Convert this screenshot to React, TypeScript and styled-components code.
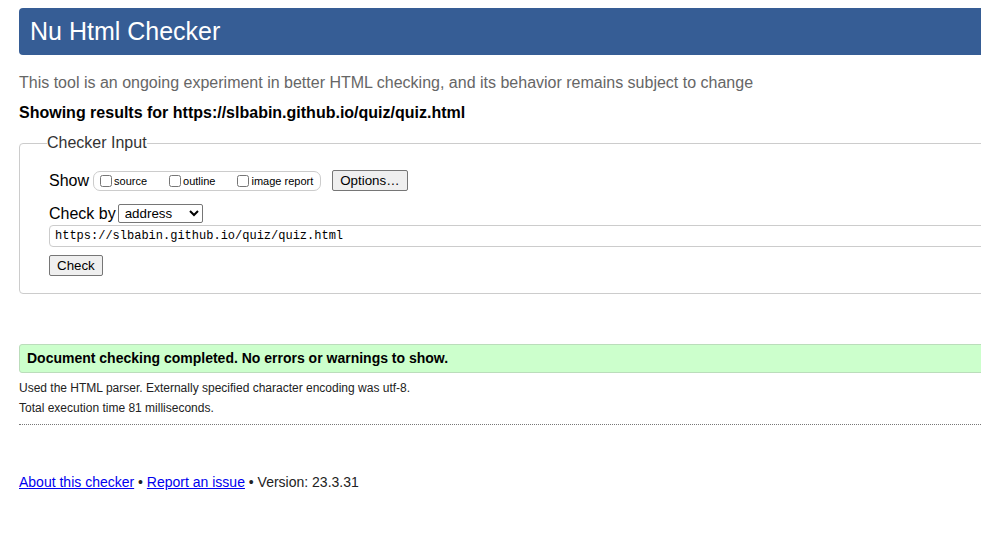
import React from "react";
import styled, { createGlobalStyle } from "styled-components";

const GlobalStyle = createGlobalStyle`
  html, body {
    margin: 0;
    padding: 0;
    background: #fff;
    overflow: hidden;
  }
  body {
    font-family: "Liberation Sans", Arial, sans-serif;
    color: #000;
  }
`;

const Page = styled.div`
  width: 1200px;
  padding: 8px 0 0 19px;
`;

const Header = styled.h1`
  margin: 0;
  height: 47px;
  line-height: 47px;
  padding-left: 11px;
  background: #365d95;
  color: #fff;
  font-size: 25px;
  font-weight: normal;
  border-radius: 4px;
`;

const Intro = styled.p`
  margin: 19px 0 0;
  font-size: 16px;
  line-height: 18px;
  color: #666;
`;

const Results = styled.p`
  margin: 12px 0 0;
  font-size: 16px;
  line-height: 18px;
  font-weight: bold;
`;

const InputSet = styled.fieldset`
  margin: 12px 0 0;
  padding: 8px 0 17px 27px;
  border: 1px solid #ccc;
  border-radius: 4px;
  legend {
    padding: 0;
    font-size: 16px;
    color: #333;
  }
`;

const Row = styled.div<{ $gap?: number }>`
  display: flex;
  align-items: center;
  margin: ${(p) => p.$gap ?? 0}px 0 0 2px;
  font-size: 16px;
`;

const Label = styled.span`
  margin-right: 4px;
`;

const Group = styled.span`
  display: inline-flex;
  align-items: center;
  height: 18px;
  padding: 0 7px 0 2px;
  border: 1px solid #ccc;
  border-radius: 7px;
  font-size: 11px;
  input {
    width: 12px;
    height: 12px;
    margin: 0 2px 0 4px;
  }
  label {
    display: inline-flex;
    align-items: center;
    margin-right: 18px;
  }
  label:last-child {
    margin-right: 0;
  }
`;

const Button = styled.button<{ $offset?: number }>`
  font-family: "Liberation Sans", Arial, sans-serif;
  font-size: 13.33px;
  height: 21px;
  margin-left: ${(p) => p.$offset ?? 0}px;
  padding: 0 7px;
  background: #efefef;
  border: 1px solid #767676;
  border-radius: 2px;
  color: #000;
`;

const Select = styled.select`
  font-family: "Liberation Sans", Arial, sans-serif;
  font-size: 13.33px;
  width: 85px;
  height: 19px;
  margin-left: -2px;
  padding: 0 0 0 2px;
  border: 1px solid #767676;
  border-radius: 2px;
  background: #fff;
  color: #000;
`;

const UrlInput = styled.input`
  box-sizing: border-box;
  width: 1000px;
  height: 22px;
  padding: 0 5px;
  font-family: "Liberation Mono", "DejaVu Sans Mono", monospace;
  font-size: 12px;
  border: 1px solid #ccc;
  border-radius: 4px;
  color: #000;
`;

const Success = styled.p`
  margin: 50px 0 0;
  height: 27px;
  line-height: 27px;
  padding-left: 7px;
  background: #ccffcc;
  border: 1px solid #bbddbb;
  border-radius: 3px;
  font-size: 14px;
  font-weight: bold;
`;

const Detail = styled.p<{ $gap: number }>`
  margin: ${(p) => p.$gap}px 0 0;
  font-size: 12px;
  line-height: 14px;
  color: #222;
`;

const Rule = styled.hr`
  margin: 9px 0 0;
  border: 0;
  border-top: 1px dotted #777;
`;

const Footer = styled.p`
  margin: 49px 0 0;
  font-size: 14px;
  line-height: 16px;
  color: #222;
  a {
    color: #0000ee;
  }
`;

export default function App() {
  return (
    <Page>
      <GlobalStyle />
      <Header>Nu Html Checker</Header>
      <Intro>
        This tool is an ongoing experiment in better HTML checking, and its behavior remains subject to change
      </Intro>
      <Results>Showing results for https://slbabin.github.io/quiz/quiz.html</Results>
      <InputSet>
        <legend>Checker Input</legend>
        <Row $gap={10}>
          <Label>Show</Label>
          <Group>
            <label><input type="checkbox" />source</label>
            <label><input type="checkbox" />outline</label>
            <label><input type="checkbox" />image report</label>
          </Group>
          <Button $offset={11}>Options…</Button>
        </Row>
        <Row $gap={13}>
          <Label>Check by</Label>
          <Select defaultValue="address">
            <option value="address">address</option>
            <option value="file">file upload</option>
            <option value="text">text input</option>
          </Select>
        </Row>
        <Row $gap={2}>
          <UrlInput defaultValue="https://slbabin.github.io/quiz/quiz.html" />
        </Row>
        <Row $gap={8}>
          <Button>Check</Button>
        </Row>
      </InputSet>
      <Success>Document checking completed. No errors or warnings to show.</Success>
      <Detail $gap={8}>Used the HTML parser. Externally specified character encoding was utf-8.</Detail>
      <Detail $gap={6}>Total execution time 81 milliseconds.</Detail>
      <Rule />
      <Footer>
        <a href="#about">About this checker</a> • <a href="#issue">Report an issue</a> • Version: 23.3.31
      </Footer>
    </Page>
  );
}
